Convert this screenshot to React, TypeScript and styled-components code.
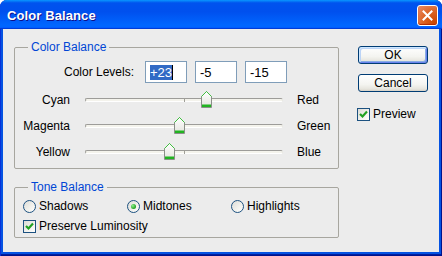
import React from "react";
import styled, { createGlobalStyle } from "styled-components";

const sliders = [
  { left: "Cyan", right: "Red", value: 23 },
  { left: "Magenta", right: "Green", value: -5 },
  { left: "Yellow", right: "Blue", value: -15 },
];

const tones = [
  { name: "Shadows", checked: false },
  { name: "Midtones", checked: true },
  { name: "Highlights", checked: false },
];

const Thumb = () => (
  <ThumbWrap>
    <svg width="11" height="17" viewBox="0 0 11 17">
      <defs>
        <linearGradient id="thumbFill" x1="0" y1="0" x2="0" y2="1">
          <stop offset="0" stopColor="#ffffff" />
          <stop offset="1" stopColor="#e3e3dc" />
        </linearGradient>
      </defs>
      <path d="M0.5 5.5 L5.5 0.5 L10.5 5.5 V16.5 H0.5 Z" fill="url(#thumbFill)" stroke="#8a8f88" />
      <path d="M0.5 5.5 L5.5 0.5 L10.5 5.5" fill="none" stroke="#3fbf3f" />
      <rect x="1" y="13.5" width="9" height="2.5" fill="#21b421" />
    </svg>
  </ThumbWrap>
);

const Check = () => (
  <CheckBox>
    <svg width="11" height="11" viewBox="0 0 11 11">
      <path d="M2 5 L4.5 7.5 L9 2.5" fill="none" stroke="#21a121" strokeWidth="2.2" />
    </svg>
  </CheckBox>
);

export default function App() {
  return (
    <>
      <GlobalStyle />
      <Window>
        <TitleBar>
          <Title>Color Balance</Title>
          <CloseButton>
            <svg width="13" height="13" viewBox="0 0 13 13">
              <path d="M2.5 2.5 L10.5 10.5 M10.5 2.5 L2.5 10.5" stroke="#fff" strokeWidth="2" strokeLinecap="square" />
            </svg>
          </CloseButton>
        </TitleBar>
        <Client>
          <LeftCol>
            <Group>
              <Legend>Color Balance</Legend>
              <LevelsRow>
                <LevelLabel>Color Levels:</LevelLabel>
                <Field>
                  <Selected>+23</Selected>
                  <Caret />
                </Field>
                <Field>-5</Field>
                <Field>-15</Field>
              </LevelsRow>
              <Sliders>
                {sliders.map((s) => (
                  <SliderRow key={s.left}>
                    <SideLabel>{s.left}</SideLabel>
                    <Track>
                      <span style={{ left: 99 + s.value * 0.99 - 6.5 }}>
                        <Thumb />
                      </span>
                    </Track>
                    <span>{s.right}</span>
                  </SliderRow>
                ))}
              </Sliders>
            </Group>
            <ToneGroup>
              <Legend>Tone Balance</Legend>
              <ToneRow>
                {tones.map((t) => (
                  <Option key={t.name}>
                    <Radio $checked={t.checked} />
                    {t.name}
                  </Option>
                ))}
              </ToneRow>
              <CheckRow>
                <Option>
                  <Check />
                  Preserve Luminosity
                </Option>
              </CheckRow>
            </ToneGroup>
          </LeftCol>
          <RightCol>
            <Button $default>OK</Button>
            <Button>Cancel</Button>
            <PreviewRow>
              <Check />
              Preview
            </PreviewRow>
          </RightCol>
        </Client>
      </Window>
    </>
  );
}

const GlobalStyle = createGlobalStyle`
  html, body {
    margin: 0;
    padding: 0;
    background: #fff;
  }
  body {
    font-family: "Liberation Sans", Arial, sans-serif;
    font-size: 12px;
    color: #000;
  }
`;

const Window = styled.div`
  width: 442px;
  height: 256px;
  box-sizing: border-box;
  display: flex;
  flex-direction: column;
  background: #0553e2;
  border-radius: 7px 7px 0 0;
  overflow: hidden;
  box-shadow: inset 1px 0 #0831d9, inset -1px 0 #00138c, inset 0 -1px #00138c,
    inset 0 -2px #001ea0;
`;

const TitleBar = styled.div`
  height: 29px;
  flex-shrink: 0;
  display: flex;
  align-items: center;
  justify-content: space-between;
  padding: 2px 4px 0 7px;
  box-sizing: border-box;
  background: linear-gradient(
    180deg,
    #0997ff,
    #0053ee 10%,
    #0050ee 40%,
    #0066ff 86%,
    #0066ff 92%,
    #005bff 95%,
    #003dd7 97%,
    #003dd7
  );
`;

const Title = styled.span`
  color: #fff;
  font-weight: bold;
  font-size: 13px;
  letter-spacing: 0.1px;
  text-shadow: 1px 1px #0f1089;
`;

const CloseButton = styled.div`
  width: 21px;
  height: 21px;
  box-sizing: border-box;
  border: 1px solid #fff;
  border-radius: 3px;
  display: flex;
  align-items: center;
  justify-content: center;
  background: radial-gradient(circle at 85% 85%, #cc4600 0%, #dc6527 50%, #e57d4f 80%, #e98966 100%);
  box-shadow: inset 0 -1px 1px #b02b00;
`;

const Client = styled.div`
  flex: 1;
  margin: 0 3px 4px;
  background: #ececec;
  display: flex;
  padding-left: 11px;
`;

const LeftCol = styled.div`
  width: 325px;
  padding-top: 11px;
`;

const Group = styled.fieldset`
  margin: 0;
  padding: 0 0 3px;
  min-width: 0;
  border: 1px solid #a7a69f;
  border-radius: 2px;
`;

const ToneGroup = styled(Group)`
  margin-top: 11px;
`;

const Legend = styled.legend`
  margin-left: 13px;
  padding: 0 3px;
  color: #0046d5;
  font-size: 12px;
  line-height: 14px;
`;

const LevelsRow = styled.div`
  display: flex;
  align-items: center;
  height: 22px;
  margin-top: 7px;
`;

const LevelLabel = styled.span`
  width: 119px;
  text-align: right;
  margin-right: 11px;
`;

const Field = styled.div`
  width: 42px;
  height: 22px;
  box-sizing: border-box;
  border: 1px solid #7f9db9;
  background: #fff;
  padding-left: 4px;
  margin-right: 8px;
  display: flex;
  align-items: center;
  font-size: 13px;
`;

const Selected = styled.span`
  background: #316ac5;
  color: #fff;
  line-height: 15px;
`;

const Caret = styled.span`
  width: 1px;
  height: 15px;
  background: #000;
`;

const Sliders = styled.div`
  margin-top: 4px;
`;

const SliderRow = styled.div`
  display: flex;
  align-items: center;
  height: 26px;
`;

const SideLabel = styled.span`
  width: 55px;
  text-align: right;
`;

const Track = styled.div`
  position: relative;
  width: 198px;
  height: 4px;
  box-sizing: border-box;
  margin: 0 14px 0 15px;
  border: 1px solid;
  border-color: #9d9c99 #e8e8e2 #ffffff #9d9c99;
  border-radius: 2px;
  background: #f4f3ec;
  &::after {
    content: "";
    position: absolute;
    left: 98px;
    top: -1px;
    width: 1px;
    height: 4px;
    background: #a09f98;
  }
  & > span {
    position: absolute;
    top: -8px;
    z-index: 1;
  }
`;

const ThumbWrap = styled.div`
  display: block;
  width: 11px;
  height: 17px;
  svg {
    display: block;
  }
`;

const ToneRow = styled.div`
  display: grid;
  grid-template-columns: repeat(3, 104px);
  padding-left: 8px;
  margin-top: 4px;
  height: 16px;
`;

const CheckRow = styled.div`
  display: flex;
  padding-left: 8px;
  margin-top: 4px;
  height: 16px;
`;

const Option = styled.label`
  display: flex;
  align-items: center;
  gap: 3px;
`;

const Radio = styled.span<{ $checked?: boolean }>`
  width: 13px;
  height: 13px;
  box-sizing: border-box;
  border-radius: 50%;
  border: 1px solid #1c5180;
  background: linear-gradient(135deg, #dcdcd7 0%, #f2f2ee 60%, #ffffff 100%);
  display: flex;
  align-items: center;
  justify-content: center;
  &::after {
    content: "";
    display: ${(p) => (p.$checked ? "block" : "none")};
    width: 5px;
    height: 5px;
    border-radius: 50%;
    background: radial-gradient(circle at 35% 35%, #8ef08e, #21a121 70%);
  }
`;

const CheckBox = styled.span`
  width: 13px;
  height: 13px;
  box-sizing: border-box;
  border: 1px solid #1c5180;
  background: linear-gradient(135deg, #dcdcd7 0%, #f2f2ee 60%, #ffffff 100%);
  display: flex;
  align-items: center;
  justify-content: center;
  svg {
    display: block;
  }
`;

const RightCol = styled.div`
  display: flex;
  flex-direction: column;
  margin-left: 19px;
  padding-top: 17px;
  width: 71px;
`;

const Button = styled.div<{ $default?: boolean }>`
  width: 70px;
  height: 18px;
  box-sizing: border-box;
  border: 1px solid #003c74;
  border-radius: 3px;
  display: flex;
  align-items: center;
  justify-content: center;
  margin-bottom: 10px;
  background: linear-gradient(180deg, #ffffff 0%, #f4f4f0 60%, #e6e5dd 88%, #d6d0c5 100%);
  box-shadow: ${(p) =>
    p.$default
      ? "inset 1px 1px #cee7ff, inset -1px -1px #6982ee, inset 2px 2px #bcd4f6, inset -2px -2px #89ade4"
      : "none"};
`;

const PreviewRow = styled.label`
  display: flex;
  align-items: center;
  gap: 3px;
  margin-top: 5px;
  margin-left: -1px;
`;
